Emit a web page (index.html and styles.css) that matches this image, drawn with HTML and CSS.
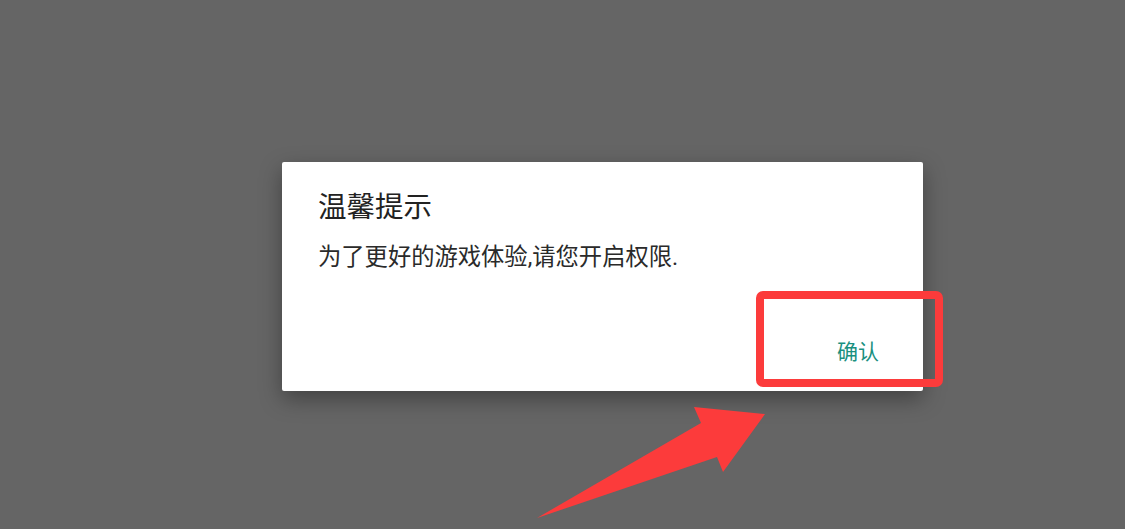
FILE: index.html
```html
<!DOCTYPE html>
<html lang="zh">
<head>
<meta charset="utf-8">
<title>温馨提示</title>
<link rel="stylesheet" href="styles.css">
</head>
<body>
<div class="screen">
  <div class="dialog">
    <div class="title">温馨提示</div>
    <div class="message">为了更好的游戏体验,请您开启权限.</div>
    <div class="actions"><span class="btn">确认</span></div>
  </div>
  <svg class="annot" width="1125" height="529" viewBox="0 0 1125 529">
    <rect x="760" y="295" width="179" height="88" rx="3" ry="3" fill="none" stroke="#fc3b3b" stroke-width="8"/>
    <polygon points="537,518 701,423 694,407 765,414 723,472 717,457" fill="#fc3b3b"/>
  </svg>
</div>
</body>
</html>
```
FILE: styles.css
```css
html, body {
  margin: 0;
  padding: 0;
}
body {
  background: #656565;
  font-family: Roboto, "Noto Sans CJK SC", sans-serif;
}
.screen {
  position: relative;
  width: 1125px;
  height: 529px;
  overflow: hidden;
  padding: 162px 0 0 282px;
  box-sizing: border-box;
}
.dialog {
  width: 641px;
  box-sizing: border-box;
  background: #ffffff;
  border-radius: 2px;
  box-shadow: 0 8px 22px rgba(0, 0, 0, 0.35);
  padding: 28px 36px 25px 36px;
}
.title {
  font-size: 28.5px;
  line-height: 36px;
  color: #222222;
}
.message {
  margin-top: 15px;
  font-size: 23.3px;
  line-height: 32px;
  color: #2a2a2a;
}
.actions {
  margin-top: 65px;
  display: flex;
  justify-content: flex-end;
  padding-right: 8px;
}
.btn {
  font-size: 21px;
  line-height: 28px;
  color: #1a9080;
}
.annot {
  position: absolute;
  left: 0;
  top: 0;
  pointer-events: none;
}
```
